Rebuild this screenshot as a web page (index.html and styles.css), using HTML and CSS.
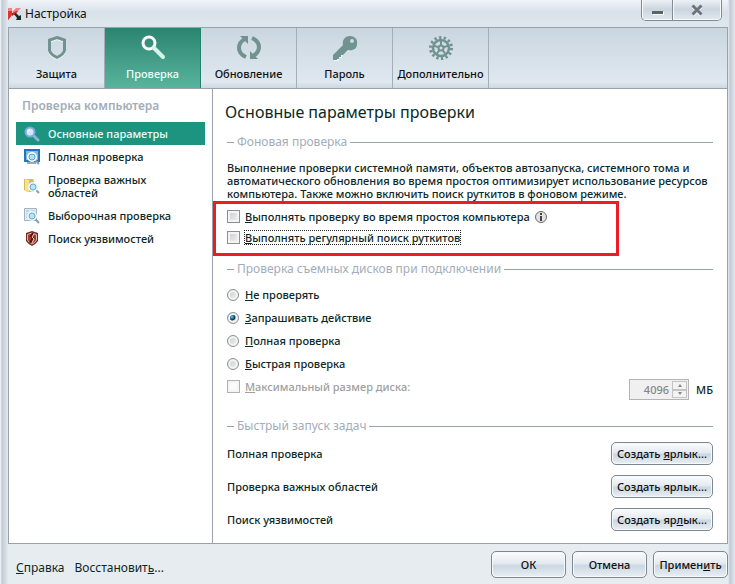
FILE: index.html
```html
<!DOCTYPE html>
<html lang="ru">
<head>
  <meta charset="UTF-8">
  <meta name="viewport" content="width=device-width, initial-scale=1.0">
  <title>Настройка</title>
  <link rel="stylesheet" href="styles.css">
</head>
<body>
  <div class="window">
    <header class="titlebar">
      <svg class="logo" width="14" height="14" viewBox="0 0 14 14">
        <path fill="#e8868a" d="M0 1h13L9 5H0z"/>
        <path fill="#f7e4e6" d="M4 1h4L4 5z"/>
        <path fill="#c8141c" d="M0 13V4h4v1l-1 4zM4 6l5-2 1-1-3 4-3 2z"/>
        <path fill="#e5322d" d="M0 4h4v4l-4 5zM4 8l4-4h2L7 8z"/>
        <path fill="#1d2b28" d="M6 7l2-1 3 3 2-1v5H8l1-2z"/>
      </svg>
      <h1 class="window-title">Настройка</h1>
      <div class="window-controls">
        <button class="minimize" type="button" aria-label="Свернуть">
          <svg width="12" height="14" viewBox="0 0 12 14"><path fill="#fff" d="M1 9h11v3H1z"/><path fill="#59636a" d="M0 8h11v3H0z"/></svg>
        </button>
        <button class="close" type="button" aria-label="Закрыть">
          <svg width="12" height="12" viewBox="0 0 12 12"><path stroke="#fff" stroke-width="3" d="M2 3l8 8m0-8l-8 8"/><path stroke="#6b757b" stroke-width="3" d="M1.500 1.500l9 9m0-9l-9 9"/></svg>
        </button>
      </div>
    </header>

    <div class="panel">
      <nav class="tabs">
        <a class="tab" href="#">
          <svg width="24" height="26" viewBox="0 0 24 26"><path fill="none" stroke="#f2f6f9" stroke-width="3" d="M12 3.500L19.500 6v10.500q-1 4-7.500 7-6.500-3-7.500-7V6z"/><path fill="none" stroke="#71938f" stroke-width="3" d="M12 2.500L19.500 5v10.500q-1 4-7.500 7-6.500-3-7.500-7V5z"/></svg>
          <span>Защита</span>
        </a>
        <a class="tab active" href="#">
          <svg width="26" height="26" viewBox="0 0 26 26"><circle cx="9" cy="8" r="6" fill="none" stroke="#fff" stroke-width="3"/><path stroke="#d5f3e9" stroke-width="4" stroke-linecap="round" d="M14 13l9 9"/></svg>
          <span>Проверка</span>
        </a>
        <a class="tab" href="#">
          <svg width="26" height="26" viewBox="0 0 26 26"><g fill="none" stroke="#71938f" stroke-width="4"><path d="M10 22Q3 19 3 13t6-9"/><path d="M16 3q7 3 7 9t-6 9"/></g><path fill="#71938f" d="M4 1h8v8zM14 16v8h8z"/></svg>
          <span>Обновление</span>
        </a>
        <a class="tab" href="#">
          <svg width="26" height="26" viewBox="0 0 26 26"><path fill="#f2f6f9" d="M2 26v-4l11-11 4 4-7 6v2H7v3z"/><path fill="#71938f" fill-rule="evenodd" d="M1 25v-5L11 10C10 5 13 1 18 1s8 4 7 8c0 5-4 7-9 6l-5 5H9v2H7v2H5v1zM20 4a2 2 0 100 4 2 2 0 000-4z"/></svg>
          <span>Пароль</span>
        </a>
        <a class="tab" href="#">
          <svg width="26" height="26" viewBox="0 0 26 26" fill="none" stroke="#71938f">
            <circle cx="13" cy="13" r="10.500" stroke-width="3" stroke-dasharray="2.300 2.420"/>
            <circle cx="13" cy="13" r="8" stroke-width="2.500"/>
            <circle cx="13" cy="13" r="2.500" stroke-width="2"/>
            <path stroke-width="2" d="M13 5v5M5.400 10.500l4.800 1.600M8.300 19.500l2.900-4.100M17.700 19.500l-2.900-4.100M20.600 10.500l-4.800 1.600"/>
          </svg>
          <span>Дополнительно</span>
        </a>
      </nav>

      <div class="content">
        <aside class="sidebar">
          <h2 class="sidebar-title">Проверка компьютера</h2>
          <nav class="menu">
            <a class="menu-item active" href="#">
              <svg width="16" height="16" viewBox="0 0 16 16"><path stroke="#8fb3d5" stroke-width="3" stroke-linecap="round" d="M10 10l4 4"/><circle cx="6" cy="6" r="4.500" fill="#cfe9fb" stroke="#7fa9dc" stroke-width="2"/><path stroke="#fff" fill="none" d="M4 6q0-2 2-2"/></svg>
              Основные параметры
            </a>
            <a class="menu-item" href="#">
              <svg width="16" height="16" viewBox="0 0 16 16"><path fill="#2873b4" d="M0 0h16v13H0z"/><path fill="#7dbfe6" d="M2 2h12v9H2z"/><path fill="#9eaab3" d="M3 13h9v2H3z"/><path stroke="#869faf" stroke-width="2" d="M11 11l4 4"/><circle cx="8" cy="8" r="4" fill="#b5e2f5" stroke="#fff" stroke-width="2"/><circle cx="8" cy="8" r="3" fill="none" stroke="#55a2cf"/></svg>
              Полная проверка
            </a>
            <a class="menu-item" href="#">
              <svg width="16" height="16" viewBox="0 0 16 16"><path fill="#d8bd4f" d="M0 1h9l1 2v11H4l-4-2z"/><path fill="#f6e38c" d="M1 1l4 1v12l-4-2z"/><path stroke="#869faf" stroke-width="2" d="M11 11l4 4"/><circle cx="9" cy="9" r="4" fill="#b8e4f7" stroke="#edf5f8" stroke-width="2"/><circle cx="9" cy="9" r="3" fill="none" stroke="#69abd0"/></svg>
              Проверка важных областей
            </a>
            <a class="menu-item" href="#">
              <svg width="16" height="16" viewBox="0 0 16 16"><path fill="#dfe8ef" stroke="#9cb5c7" d="M.500.500h12v12H.500z"/><path stroke="#a7becf" d="M2 3h3M2 6h3M2 9h3M7 3h4"/><path stroke="#869faf" stroke-width="2" d="M11 11l4 4"/><circle cx="8" cy="8" r="4" fill="#b8e4f7" stroke="#edf5f8" stroke-width="2"/><circle cx="8" cy="8" r="3" fill="none" stroke="#69abd0"/></svg>
              Выборочная проверка
            </a>
            <a class="menu-item" href="#">
              <svg width="16" height="16" viewBox="0 0 16 16"><path fill="#6c2b24" d="M2 2l6-2 6 2v8q-2 3-6 5-4-2-6-5z"/><path fill="#a33c30" stroke="#e6b5a6" d="M3.500 3.500L8 2l4.500 1.500V9Q11 12 8 13 5 12 3.500 9z"/><path fill="none" stroke="#4d1815" stroke-width="2" d="M9 2L7 5l2 2-3 5"/><path fill="none" stroke="#f1d0c3" d="M10 3L8 6l2 2-2 4"/></svg>
              Поиск уязвимостей
            </a>
          </nav>
        </aside>

        <main class="main">
          <h2 class="page-title">Основные параметры проверки</h2>

          <section class="group background-scan">
            <h3 class="group-title">Фоновая проверка</h3>
            <p class="description">Выполнение проверки системной памяти, объектов автозапуска, системного тома и автоматического обновления во время простоя оптимизирует использование ресурсов компьютера. Также можно включить поиск руткитов в фоновом режиме.</p>
            <div class="checks">
              <div class="option">
                <input type="checkbox" id="idle-scan">
                <label for="idle-scan"><u>В</u>ыполнять проверку во время простоя компьютера</label>
                <svg class="info" width="12" height="12" viewBox="0 0 12 12"><circle cx="6" cy="6" r="5.500" fill="#e2e2e2" stroke="#6d6d6d"/><path fill="#444" d="M5 2h2v2H5zM5 5h2v5H5z"/></svg>
              </div>
              <div class="option">
                <input type="checkbox" id="rootkits">
                <label class="focused" for="rootkits"><u>В</u>ыполнять регулярный поиск руткитов</label>
              </div>
              <div class="highlight"></div>
            </div>
          </section>

          <section class="group drives">
            <h3 class="group-title">Проверка съемных дисков при подключении</h3>
            <div class="radios">
              <div class="option">
                <input type="radio" name="drives" id="drive-none">
                <label for="drive-none"><u>Н</u>е проверять</label>
              </div>
              <div class="option">
                <input type="radio" name="drives" id="drive-ask" checked>
                <label for="drive-ask"><u>З</u>апрашивать действие</label>
              </div>
              <div class="option">
                <input type="radio" name="drives" id="drive-full">
                <label for="drive-full"><u>П</u>олная проверка</label>
              </div>
              <div class="option">
                <input type="radio" name="drives" id="drive-quick">
                <label for="drive-quick"><u>Б</u>ыстрая проверка</label>
              </div>
              <div class="option disabled">
                <input type="checkbox" id="max-size" disabled>
                <label for="max-size"><u>М</u>аксимальный размер диска:</label>
                <div class="spinner">
                  <input type="number" id="disk-size" value="4096" disabled>
                  <button class="up" type="button" aria-label="Больше" disabled></button>
                  <button class="down" type="button" aria-label="Меньше" disabled></button>
                </div>
                <label class="unit" for="disk-size">МБ</label>
              </div>
            </div>
          </section>

          <section class="group tasks">
            <h3 class="group-title">Быстрый запуск задач</h3>
            <div class="task-list">
              <div class="task"><span>Полная проверка</span><button class="button" type="button">Создать <u>я</u>рлык...</button></div>
              <div class="task"><span>Проверка важных областей</span><button class="button" type="button">Соз<u>д</u>ать ярлык...</button></div>
              <div class="task"><span>Поиск уязвимостей</span><button class="button" type="button">Создать яр<u>л</u>ык...</button></div>
            </div>
          </section>
        </main>
      </div>
    </div>

    <footer class="footer">
      <a href="#"><u>С</u>правка</a>
      <a href="#">Восстановит<u>ь</u>...</a>
      <div class="actions">
        <button class="button" type="button">ОК</button>
        <button class="button" type="button">Отмена</button>
        <button class="button" type="button">Примен<u>и</u>ть</button>
      </div>
    </footer>
  </div>
</body>
</html>
```
FILE: styles.css
```css
* {
  margin: 0;
  padding: 0;
  box-sizing: border-box;
}

:root {
  --text: #0c2826;
  --line: #99a2ab;
  --muted: #a3adb8;
  --green: #1c9480;
  --button: linear-gradient(#fbfcfd 0%, #e4eaf0 45%, #cbd7e1 55%, #e9eff4 100%);
}

body {
  font-family: "Noto Sans", "Open Sans", sans-serif;
  font-size: 11px;
  font-weight: 500;
  line-height: 13px;
  color: var(--text);
  background: #e7ecf0;
}

a {
  color: inherit;
  text-decoration: none;
}

button,
input {
  font: inherit;
  color: inherit;
}

svg {
  display: block;
  flex: none;
}

.window {
  display: flex;
  flex-direction: column;
  min-height: 100vh;
  padding: 0 7px 0 8px;
  background: linear-gradient(90deg, #f7f9fa 0, #c2cbd6 2px, #dde3ea 7px, transparent 8px calc(100% - 7px), #c2cad5 calc(100% - 5px), #e3e8ee 100%), #e7ecf0;
}

.titlebar {
  display: flex;
  height: 27px;
  background: linear-gradient(#f0f4f8, #d8e1ea 45%, #dfe7ee);
}

.logo {
  margin-top: 7px;
}

.window-title {
  padding: 6px 0 0 3px;
  font-size: 12px;
  line-height: 15px;
  font-weight: 400;
  color: #111;
}

.window-controls {
  display: flex;
  height: 21px;
  margin: 0 6px 0 auto;
  border: 1px solid #7e8993;
  border-top: 0;
  border-radius: 0 0 5px 5px;
  overflow: hidden;
}

.window-controls button {
  display: flex;
  align-items: center;
  justify-content: center;
  width: 31px;
  border: 1px solid #f8fafc;
  border-top: 0;
  background: linear-gradient(#edf1f5, #cbd5df 50%, #e0e7ee);
}

.window-controls .close {
  width: 48px;
  box-shadow: -1px 0 0 #7e8993;
}

.panel {
  display: flex;
  flex-direction: column;
  flex: 1;
  border: 1px solid var(--line);
  background: #fff;
}

.tabs {
  display: flex;
  height: 61px;
  border-bottom: 1px solid var(--line);
  background: linear-gradient(#cad6df, #dfe8f0 90%, #ccd7e0);
}

.tab {
  display: flex;
  flex-direction: column;
  align-items: center;
  gap: 6px;
  width: 96px;
  padding-top: 7px;
  border-right: 1px solid #a2afba;
  color: #111;
  white-space: nowrap;
}

.tab.active {
  border-color: #22806c;
  background: linear-gradient(#2a846f, #59b49e);
  color: #e9fff7;
}

.content {
  display: flex;
  flex: 1;
}

.sidebar {
  width: 204px;
  padding: 9px 7px;
  border-right: 1px solid var(--line);
}

.sidebar-title {
  padding: 0 6px 8px;
  font-size: 12px;
  line-height: 16px;
  font-weight: 600;
  color: var(--muted);
}

.menu-item {
  display: flex;
  align-items: center;
  gap: 8px;
  padding: 5px 0 5px 8px;
}

.menu-item:nth-child(3) {
  padding-right: 40px;
}

.menu-item svg {
  margin: -2px 0;
}

.menu-item.active {
  background: var(--green);
  color: #e9fff7;
}

.main {
  flex: 1;
  padding: 12px 14px 0;
}

.page-title {
  margin-left: -2px;
  font-size: 16px;
  line-height: 22px;
  font-weight: 400;
}

.group-title {
  display: flex;
  align-items: center;
  gap: 3px;
  font-size: 12px;
  line-height: 16px;
  font-weight: 400;
  color: var(--muted);
}

.group-title::before,
.group-title::after {
  content: "";
  width: 7px;
  height: 1px;
  background: var(--line);
}

.group-title::after {
  flex: 1;
}

.background-scan {
  padding-top: 11px;
}

.description {
  padding-top: 11px;
}

.checks {
  position: relative;
  padding-top: 6px;
}

.highlight {
  position: absolute;
  top: 1px;
  left: -14px;
  width: 406px;
  height: 55px;
  border: 3px solid #ed1c24;
  pointer-events: none;
}

.option {
  display: flex;
  align-items: center;
  gap: 5px;
  height: 21px;
}

.option input[type="checkbox"],
.option input[type="radio"] {
  appearance: none;
  flex: none;
  width: 13px;
  height: 13px;
  border: 1px solid #8e8f8f;
  background: linear-gradient(135deg, #c6cbd1, #f3f4f6);
  box-shadow: inset 0 0 0 2px #f4f4f4;
}

.option input[type="radio"] {
  width: 12px;
  height: 12px;
  margin-right: 1px;
  border-radius: 50%;
}

.option input[type="radio"]:checked {
  background: radial-gradient(circle at 40% 40%, #6bd3f5 0, #17658f 2px, #0d2e4c 3px, #d9dee2 4px);
}

.option input[type="checkbox"]:disabled {
  border-color: #b1b1b1;
  background: #fafafa;
}

.focused {
  outline: 1px dotted #222;
}

.drives {
  padding-top: 13px;
}

.radios {
  padding-top: 6px;
}

.radios .option {
  height: 23px;
}

.disabled {
  color: #a0a0a0;
}

.spinner {
  display: grid;
  grid-template-columns: 1fr 15px;
  grid-template-rows: 1fr 1fr;
  width: 60px;
  height: 21px;
  margin-top: 6px;
  margin-left: auto;
  padding: 1px;
  border: 1px solid #b4b4b4;
  background: #f0f0f0;
}

.spinner input {
  grid-row: span 2;
  width: 100%;
  padding-right: 3px;
  border: 0;
  background: none;
  color: #858585;
  text-align: right;
  appearance: textfield;
}

.spinner input::-webkit-inner-spin-button {
  display: none;
}

.spinner button {
  display: flex;
  align-items: center;
  justify-content: center;
  border: 1px solid #c3c3c3;
  background: #f3f3f3;
}

.spinner button::before {
  content: "";
  border: 2px solid transparent;
  border-top: 0;
  border-bottom: 3px solid #858585;
}

.spinner .down::before {
  transform: rotate(180deg);
}

.unit {
  padding: 6px 0 0 2px;
  color: var(--text);
}

.tasks {
  padding-top: 20px;
}

.task-list {
  display: grid;
  gap: 10px;
  padding-top: 8px;
}

.task {
  display: flex;
  align-items: center;
  justify-content: space-between;
}

.button {
  min-width: 102px;
  height: 23px;
  border: 1px solid #7d8791;
  border-radius: 5px;
  background: var(--button);
  box-shadow: inset 0 0 0 1px #f7fafc;
  color: #111;
  white-space: nowrap;
}

.footer {
  display: flex;
  align-items: center;
  gap: 10px;
  height: 40px;
  padding-left: 8px;
  font-size: 12px;
  font-weight: 400;
  line-height: 15px;
}

.footer > a {
  padding-top: 7px;
}

.actions {
  display: flex;
  gap: 6px;
  margin-left: auto;
}

.actions .button {
  min-width: 75px;
  height: 27px;
  font-size: 11px;
  font-weight: 500;
}
```
